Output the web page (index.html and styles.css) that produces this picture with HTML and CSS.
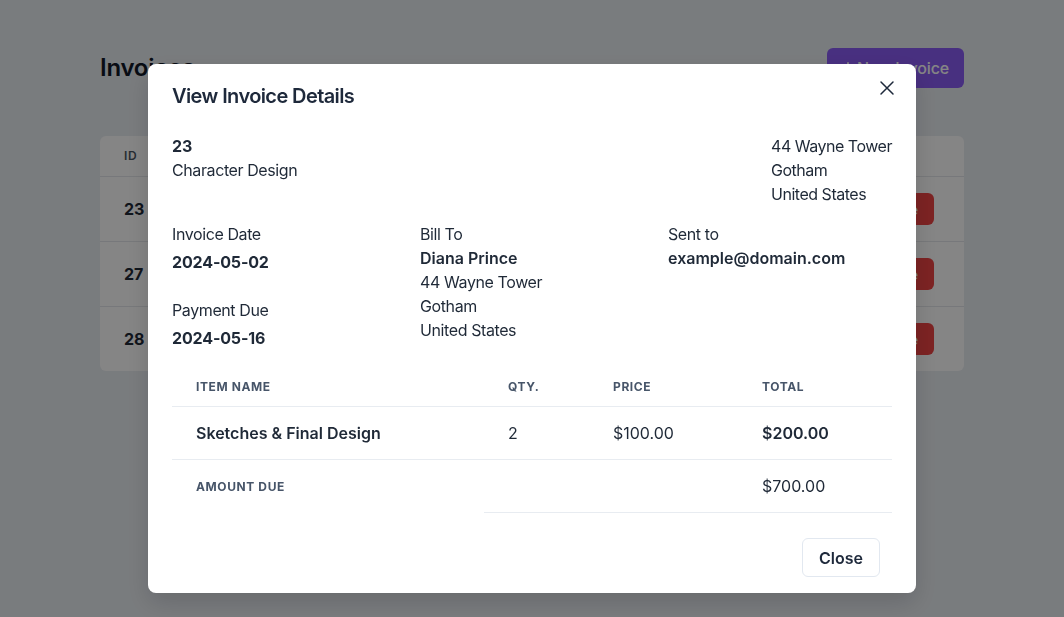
FILE: index.html
```html
<!DOCTYPE html>
<html lang="en">
<head>
<meta charset="utf-8">
<title>Invoices</title>
<link rel="stylesheet" href="styles.css">
</head>
<body>
<div class="page">
  <header class="page-head">
    <h1 class="page-title">Invoices</h1>
    <button class="btn-new">
      <svg class="plus" viewBox="0 0 12 12" width="12" height="12"><path d="M6 1v10M1 6h10" stroke="currentColor" stroke-width="1.8" stroke-linecap="round" fill="none"/></svg>
      New Invoice
    </button>
  </header>
  <div class="card">
    <table class="list">
      <thead>
        <tr><th class="idcol">ID</th><th></th><th class="right"></th></tr>
      </thead>
      <tbody>
        <tr><td class="id">23</td><td></td><td class="right"><button class="btn-del">Delete</button></td></tr>
        <tr><td class="id">27</td><td></td><td class="right"><button class="btn-del">Delete</button></td></tr>
        <tr><td class="id">28</td><td></td><td class="right"><button class="btn-del">Delete</button></td></tr>
      </tbody>
    </table>
  </div>
</div>

<div class="overlay"></div>

<div class="modal">
  <div class="modal-head">
    <h2 class="modal-title">View Invoice Details</h2>
    <button class="btn-x" aria-label="Close">
      <svg viewBox="0 0 24 24" width="24" height="24"><path d="M6 6l12 12M18 6L6 18" stroke="currentColor" stroke-width="1.5" stroke-linecap="round" fill="none"/></svg>
    </button>
  </div>
  <div class="summary">
    <div>
      <div class="strong">23</div>
      <div>Character Design</div>
    </div>
    <div class="addr">
      <div>44 Wayne Tower</div>
      <div>Gotham</div>
      <div>United States</div>
    </div>
  </div>
  <div class="meta">
    <div class="meta-col">
      <div class="field">
        <div>Invoice Date</div>
        <div class="value">2024-05-02</div>
      </div>
      <div class="field">
        <div>Payment Due</div>
        <div class="value">2024-05-16</div>
      </div>
    </div>
    <div class="meta-col">
      <div>Bill To</div>
      <div class="strong">Diana Prince</div>
      <div>44 Wayne Tower</div>
      <div>Gotham</div>
      <div>United States</div>
    </div>
    <div class="meta-col">
      <div>Sent to</div>
      <div class="strong">example@domain.com</div>
    </div>
  </div>
  <table class="items">
    <colgroup><col class="c1"><col class="c2"><col class="c3"><col class="c4"></colgroup>
    <thead>
      <tr><th>Item Name</th><th>Qty.</th><th>Price</th><th>Total</th></tr>
    </thead>
    <tbody>
      <tr class="item"><td class="strong">Sketches &amp; Final Design</td><td class="num">2</td><td class="num">$100.00</td><td class="strong">$200.00</td></tr>
      <tr class="due"><th class="noline">Amount Due</th><td colspan="2"></td><td class="num">$700.00</td></tr>
    </tbody>
  </table>
  <div class="modal-foot">
    <button class="btn-close">Close</button>
  </div>
</div>
</body>
</html>
```

FILE: styles.css
```css
* { box-sizing: border-box; }
html, body { margin: 0; padding: 0; }
body {
  font-family: Inter, "Noto Sans", "Liberation Sans", sans-serif;
  font-size: 16px;
  line-height: 24px;
  letter-spacing: -0.025em;
  color: #1f2937;
  background: #e9edf2;
  height: 617px;
  overflow: hidden;
}
button { font-family: inherit; cursor: pointer; }

.page {
  width: 864px;
  margin: 0 auto;
  padding-top: 48px;
}
.page-head {
  display: flex;
  justify-content: space-between;
  align-items: center;
  margin-bottom: 48px;
}
.page-title {
  margin: 0;
  font-size: 24px;
  line-height: 32px;
  font-weight: 600;
  letter-spacing: -0.01em;
  color: #111827;
}
.btn-new {
  display: flex;
  align-items: center;
  gap: 3px;
  height: 40px;
  padding: 0 15px;
  border: 0;
  border-radius: 6px;
  background: #8b5cf6;
  color: #fff;
  font-size: 16px;
  font-weight: 500;
  letter-spacing: -0.01em;
}
.card {
  background: #fff;
  border-radius: 6px;
  overflow: hidden;
}
.list {
  width: 100%;
  border-collapse: collapse;
}
.list th {
  text-align: left;
  font-size: 12px;
  line-height: 16px;
  font-weight: 600;
  color: #4b5563;
  letter-spacing: 0.05em;
  text-transform: uppercase;
  padding: 12px 24px;
  border-bottom: 1px solid #e5e7eb;
}
.list th.idcol { width: 60px; }
.list td {
  padding: 16px 24px;
  height: 65px;
  border-bottom: 1px solid #e5e7eb;
}
.list tr:last-child td { border-bottom: 0; height: 64px; }
.list td.id { font-weight: 700; letter-spacing: 0; }
.list .right { text-align: right; padding-right: 30px; }
.btn-del {
  height: 32px;
  padding: 0 16px;
  border: 0;
  border-radius: 6px;
  background: #ef4444;
  color: #fff;
  font-size: 14px;
  font-weight: 600;
  vertical-align: middle;
}

.overlay {
  position: fixed;
  inset: 0;
  background: rgba(0, 0, 0, 0.48);
}

.modal {
  position: fixed;
  top: 64px;
  left: 148px;
  width: 768px;
  height: 529px;
  background: #fff;
  border-radius: 8px;
  padding: 12px 24px 16px;
  display: flex;
  flex-direction: column;
  box-shadow: 0 10px 25px rgba(0, 0, 0, 0.15);
}
.modal-head {
  display: flex;
  justify-content: space-between;
  align-items: flex-start;
}
.modal-title {
  margin: 6px 0 0;
  font-size: 20px;
  line-height: 28px;
  font-weight: 600;
  letter-spacing: -0.03em;
  color: #1e293b;
}
.btn-x {
  width: 24px;
  height: 24px;
  padding: 0;
  margin-right: -7px;
  border: 0;
  background: none;
  color: #1e293b;
  display: flex;
}
.strong { font-weight: 600; letter-spacing: 0; }
.num { letter-spacing: 0; }

.summary {
  margin-top: 24px;
  display: flex;
  justify-content: space-between;
}
.summary .strong { font-weight: 700; }
.addr { letter-spacing: -0.03em; }

.meta {
  margin-top: 16px;
  display: grid;
  grid-template-columns: repeat(3, 1fr);
  column-gap: 24px;
}
.field + .field { margin-top: 24px; }
.value {
  margin-top: 4px;
  font-weight: 700;
  letter-spacing: -0.01em;
}

.items {
  margin-top: 16px;
  width: 720px;
  border-collapse: collapse;
  table-layout: fixed;
}
.items .c1 { width: 312px; }
.items .c2 { width: 105px; }
.items .c3 { width: 149px; }
.items .c4 { width: 154px; }
.items th {
  text-align: left;
  font-size: 12px;
  line-height: 16px;
  font-weight: 700;
  color: #475569;
  letter-spacing: 0.05em;
  text-transform: uppercase;
  padding: 13px 24px 11px;
  border-bottom: 1px solid #e8ecf1;
}
.items td {
  padding: 14px 24px;
  line-height: 24px;
  border-bottom: 1px solid #e8ecf1;
}
.items .due th { padding: 19px 24px 17px; }
.items th.noline { border-bottom: 0; }

.modal-foot {
  margin-top: auto;
  display: flex;
  justify-content: flex-end;
  padding-right: 12px;
}
.btn-close {
  height: 39px;
  padding: 0 16px;
  border: 1px solid #e2e8f0;
  border-radius: 6px;
  background: #fff;
  color: #1e293b;
  font-size: 16px;
  font-weight: 600;
  letter-spacing: 0;
}
```
